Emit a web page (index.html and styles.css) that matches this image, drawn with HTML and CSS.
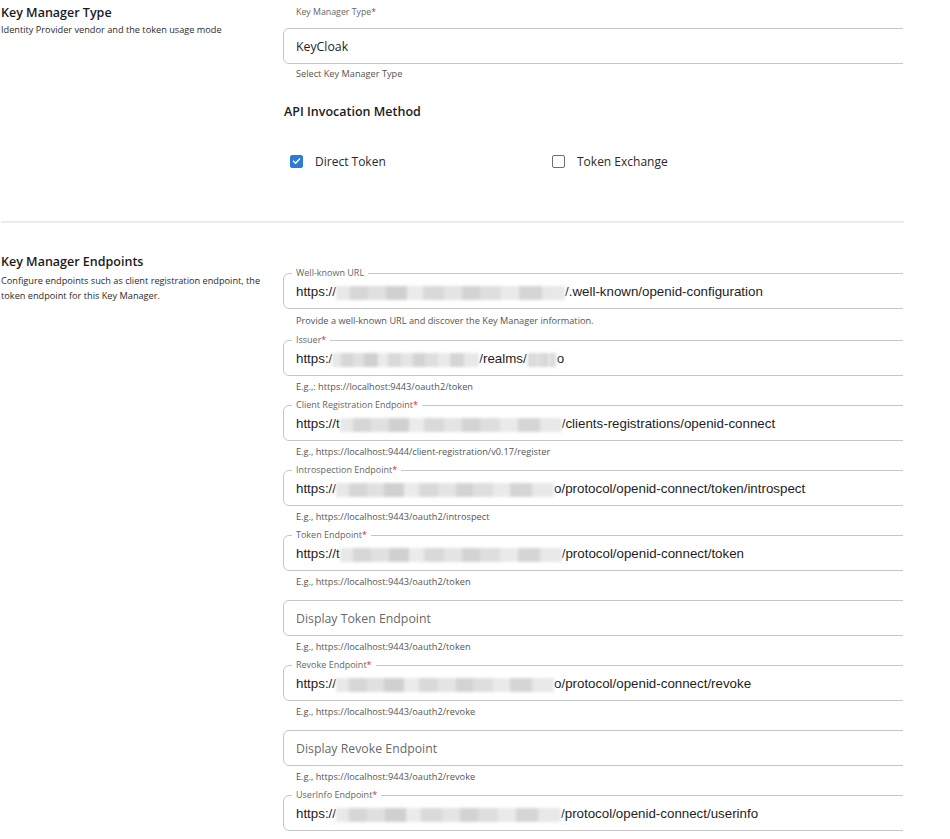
FILE: index.html
```html
<!DOCTYPE html>
<html lang="en">
<head>
<meta charset="utf-8">
<title>Key Manager</title>
<link rel="stylesheet" href="styles.css">
</head>
<body>
<div class="page">
  <section class="section">
    <div class="intro">
      <h2 class="title">Key Manager Type</h2>
      <p class="desc">Identity Provider vendor and the token usage mode</p>
    </div>
    <div class="content first">
      <div class="top-label">Key Manager Type<span class="req">*</span></div>
      <div class="clip">
        <div class="box"><span class="select-value">KeyCloak</span></div>
      </div>
      <div class="helper sel">Select Key Manager Type</div>
      <h3 class="subhead">API Invocation Method</h3>
      <div class="checks">
        <label class="check">
          <span class="cb checked">
            <svg viewBox="0 0 14 14" width="14" height="14"><path d="M3.2 7.2 L5.9 9.8 L10.9 4.4" fill="none" stroke="#fff" stroke-width="1.8" stroke-linecap="square"/></svg>
          </span>
          <span class="check-text">Direct Token</span>
        </label>
        <label class="check">
          <span class="cb"></span>
          <span class="check-text">Token Exchange</span>
        </label>
      </div>
    </div>
  </section>

  <div class="divider"></div>

  <section class="section">
    <div class="intro">
      <h2 class="title">Key Manager Endpoints</h2>
      <p class="desc multi">Configure endpoints such as client registration endpoint, the token endpoint for this Key Manager.</p>
    </div>
    <div class="content endpoints">
      <div class="group g-first">
        <div class="clip">
          <div class="box">
            <span class="float-label">Well-known URL</span>
            <span class="val">https://<span class="blur w229"></span>/.well-known/openid-configuration</span>
          </div>
        </div>
        <div class="helper">Provide a well-known URL and discover the Key Manager information.</div>
      </div>

      <div class="group">
        <div class="clip">
          <div class="box">
            <span class="float-label">Issuer<span class="req">*</span></span>
            <span class="val">https:/<span class="blur w147"></span>/realms/<span class="blur w30"></span>o</span>
          </div>
        </div>
        <div class="helper">E.g.,: https://localhost:9443/oauth2/token</div>
      </div>

      <div class="group">
        <div class="clip">
          <div class="box">
            <span class="float-label">Client Registration Endpoint<span class="req">*</span></span>
            <span class="val">https://t<span class="blur w222"></span>/clients-registrations/openid-connect</span>
          </div>
        </div>
        <div class="helper">E.g., https://localhost:9444/client-registration/v0.17/register</div>
      </div>

      <div class="group">
        <div class="clip">
          <div class="box">
            <span class="float-label">Introspection Endpoint<span class="req">*</span></span>
            <span class="val">https://<span class="blur w218"></span>o/protocol/openid-connect/token/introspect</span>
          </div>
        </div>
        <div class="helper">E.g., https://localhost:9443/oauth2/introspect</div>
      </div>

      <div class="group">
        <div class="clip">
          <div class="box">
            <span class="float-label">Token Endpoint<span class="req">*</span></span>
            <span class="val">https://t<span class="blur w222"></span>/protocol/openid-connect/token</span>
          </div>
        </div>
        <div class="helper">E.g., https://localhost:9443/oauth2/token</div>
      </div>

      <div class="group">
        <div class="clip">
          <div class="box">
            <span class="placeholder">Display Token Endpoint</span>
          </div>
        </div>
        <div class="helper">E.g., https://localhost:9443/oauth2/token</div>
      </div>

      <div class="group">
        <div class="clip">
          <div class="box">
            <span class="float-label">Revoke Endpoint<span class="req">*</span></span>
            <span class="val">https://<span class="blur w218"></span>o/protocol/openid-connect/revoke</span>
          </div>
        </div>
        <div class="helper">E.g., https://localhost:9443/oauth2/revoke</div>
      </div>

      <div class="group">
        <div class="clip">
          <div class="box">
            <span class="placeholder">Display Revoke Endpoint</span>
          </div>
        </div>
        <div class="helper">E.g., https://localhost:9443/oauth2/revoke</div>
      </div>

      <div class="group">
        <div class="clip">
          <div class="box">
            <span class="float-label">UserInfo Endpoint<span class="req">*</span></span>
            <span class="val">https://<span class="blur w225"></span>/protocol/openid-connect/userinfo</span>
          </div>
        </div>
      </div>
    </div>
  </section>
</div>
</body>
</html>
```

FILE: styles.css
```css
* { box-sizing: border-box; }

html, body {
  margin: 0;
  padding: 0;
  background: #ffffff;
}

body {
  font-family: "Open Sans", "Noto Sans", sans-serif;
  color: #212121;
  overflow: hidden;
}

.page {
  width: 950px;
  height: 839px;
  overflow: hidden;
  padding-left: 1px;
}

.section {
  display: grid;
  grid-template-columns: 282px 620px;
}

.intro {
  padding-top: 5px;
}

.section + .divider + .section .intro {
  padding-top: 0;
}

.title {
  margin: 0;
  font-size: 12.5px;
  line-height: 16px;
  font-weight: 600;
  color: #1b1b1b;
}

.desc {
  margin: 1px 0 0;
  font-size: 9.2px;
  line-height: 15px;
  color: #2b2b2b;
  width: 265px;
}

.desc.multi {
  margin-top: 3px;
}

.content {
  min-width: 0;
}

.content.first {
  padding-top: 6px;
}

.top-label {
  font-size: 8.8px;
  line-height: 12px;
  color: #666;
  padding-left: 13px;
  margin-bottom: 10px;
}

.req {
  color: #d32f2f;
}

.clip {
  width: 620px;
  overflow: hidden;
  padding-top: 6px;
  margin-top: -6px;
}

.box {
  position: relative;
  width: 660px;
  height: 36px;
  border: 1px solid #c6c6c6;
  border-radius: 6px;
  display: flex;
  align-items: center;
  padding-left: 12px;
}

.select-value {
  font-size: 12.3px;
  color: #1f1f1f;
}

.placeholder {
  font-size: 12.3px;
  color: #6a6a6a;
  padding-top: 1px;
}

.val {
  font-family: "Liberation Sans", Arial, sans-serif;
  font-size: 13.33px;
  color: #1e1e1e;
  white-space: nowrap;
  display: flex;
  align-items: center;
  padding-top: 1px;
}

.float-label {
  position: absolute;
  top: -7px;
  left: 8px;
  padding: 0 4px;
  background: #fff;
  font-size: 9px;
  line-height: 12px;
  color: #666;
  white-space: nowrap;
}

.helper {
  font-size: 9.2px;
  line-height: 12px;
  color: #555;
  padding-left: 13px;
  margin-top: 5px;
  margin-bottom: 12px;
}

.helper.sel {
  margin-top: 4px;
  margin-bottom: 0;
}

.g-first .helper {
  margin-top: 6px;
  margin-bottom: 13px;
}

.subhead {
  margin: 24px 0 0;
  font-size: 12.5px;
  line-height: 16px;
  font-weight: 600;
  color: #1b1b1b;
  padding-left: 1px;
}

.checks {
  display: flex;
  margin-top: 31px;
  padding-left: 7px;
  height: 20px;
  align-items: center;
}

.check {
  display: flex;
  align-items: center;
  width: 262px;
}

.cb {
  width: 13px;
  height: 13px;
  border: 1.6px solid #6e6e6e;
  border-radius: 2px;
  display: inline-flex;
  align-items: center;
  justify-content: center;
  flex: none;
}

.cb.checked {
  background: #2a7ad6;
  border-color: #2a7ad6;
}

.cb svg {
  display: block;
  width: 12px;
  height: 12px;
}

.check-text {
  margin-left: 12px;
  font-size: 12px;
  color: #2a2a2a;
}

.divider {
  height: 2px;
  width: 903px;
  background: #ebebeb;
  margin: 50px 0 31px;
}

.endpoints {
  padding-top: 19px;
}

.blur {
  display: inline-block;
  height: 14px;
  margin-top: 2px;
  background: linear-gradient(90deg,
    #e8e8e8 0 6%, #d6d6d6 6% 14%, #e0e0e0 14% 22%, #d0d0d0 22% 31%,
    #ebebeb 31% 38%, #d9d9d9 38% 47%, #e4e4e4 47% 55%, #d3d3d3 55% 63%,
    #dedede 63% 72%, #eaeaea 72% 80%, #d5d5d5 80% 90%, #e8e8e8 90% 100%);
  filter: blur(1.8px);
}

.w229 { width: 229px; }
.w147 { width: 147px; }
.w30 { width: 30px; }
.w222 { width: 222px; }
.w218 { width: 218px; }
.w225 { width: 225px; }
```
